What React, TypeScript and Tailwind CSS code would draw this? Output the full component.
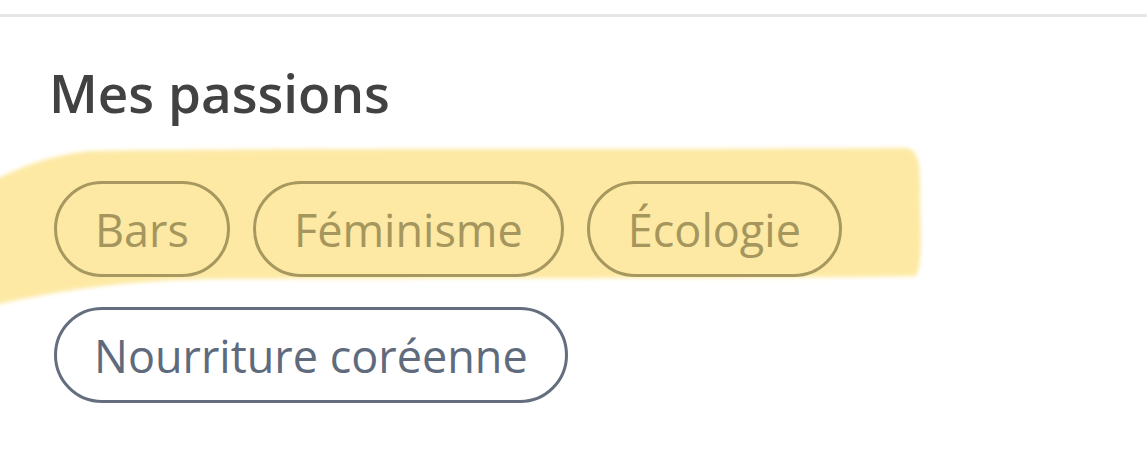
import React from "react";

const yellowTags = ["Bars", "Féminisme", "Écologie"];

function Highlight() {
  return (
    <svg
      className="absolute left-0 top-0 pointer-events-none"
      width="1147"
      height="449"
      viewBox="0 0 1147 449"
    >
      <defs>
        <filter id="soft" x="-5%" y="-20%" width="110%" height="140%">
          <feGaussianBlur stdDeviation="2.2" />
        </filter>
      </defs>
      <path
        d="M -10 182 C 20 168 45 156 90 151 C 250 148 600 150 905 148 C 918 149 921 160 920 200 C 921 240 922 265 916 276 C 760 279 400 278 210 279 C 120 281 60 290 -10 306 Z"
        fill="#fde9a3"
        filter="url(#soft)"
      />
    </svg>
  );
}

export default function App() {
  return (
    <div
      className="relative w-[1147px] h-[449px] bg-white overflow-hidden"
      style={{ fontFamily: "'Open Sans', 'Noto Sans', sans-serif" }}
    >
      <Highlight />
      <div className="relative">
        <div className="mt-[14px] h-[3px] bg-[#e6e6e6]" />
        <h2 className="pl-[49px] mt-[45px] text-[53px] leading-[62px] font-semibold text-[#424242]">
          Mes passions
        </h2>
        <div className="pl-[54px] mt-[57px] flex flex-col gap-[30px]">
          <div className="flex gap-[23px]">
            {yellowTags.map((t) => (
              <span
                key={t}
                className="h-[96px] px-[38px] flex items-center rounded-full border-[3px] border-[#a6985e] text-[#a4965c] text-[45px] leading-none"
              >
                {t}
              </span>
            ))}
          </div>
          <div className="flex">
            <span className="h-[96px] px-[37px] flex items-center rounded-full border-[3px] border-[#646e7e] text-[#5f6b7c] text-[45px] leading-none">
              Nourriture coréenne
            </span>
          </div>
        </div>
      </div>
    </div>
  );
}
